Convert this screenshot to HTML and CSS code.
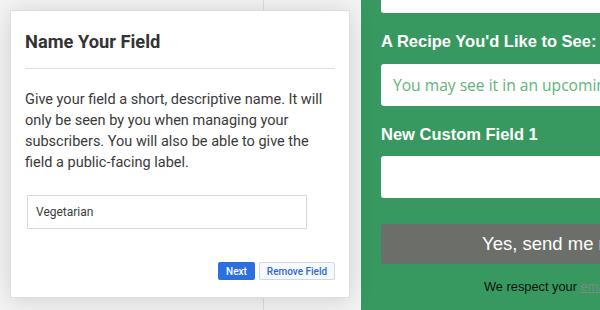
FILE: index.html
```html
<!DOCTYPE html>
<html>
<head>
<meta charset="utf-8">
<link rel="stylesheet" href="styles.css">
</head>
<body>
<div class="page">
  <div class="editor">
    <div class="sidebar"></div>
  </div>
  <div class="preview">
    <div class="form">
      <div class="field top-field"></div>
      <div class="label">A Recipe You'd Like to See:</div>
      <div class="field"><span class="placeholder">You may see it in an upcoming newsletter</span></div>
      <div class="label">New Custom Field 1</div>
      <div class="field"></div>
      <div class="submit"><span class="submit-text">Yes, send me recipes!</span></div>
      <div class="privacy"><span class="privacy-text">We respect your <span class="link">email privacy</span></span></div>
    </div>
  </div>
  <div class="modal">
    <h2 class="modal-title">Name Your Field</h2>
    <p class="modal-text">Give your field a short, descriptive name. It will only be seen by you when managing your subscribers. You will also be able to give the field a public-facing label.</p>
    <div class="name-input">Vegetarian</div>
    <div class="actions">
      <span class="btn btn-primary">Next</span>
      <span class="btn btn-secondary">Remove Field</span>
    </div>
  </div>
</div>
</body>
</html>
```
FILE: styles.css
```css
html, body {
  margin: 0;
  padding: 0;
}
body {
  width: 600px;
  height: 310px;
  overflow: hidden;
  background: #f3f3f4;
}
.page {
  position: relative;
  display: flex;
  width: 600px;
  height: 310px;
  overflow: hidden;
}
.editor {
  width: 361px;
  flex: none;
  height: 310px;
  background: #f4f4f5;
}
.sidebar {
  width: 264px;
  height: 310px;
  border-right: 1px solid #dcdcdf;
  box-sizing: border-box;
}
.preview {
  flex: none;
  width: 440px;
  height: 310px;
  background: #37995f;
  padding: 0 20px;
  box-sizing: border-box;
  font-family: "Liberation Sans", Arial, sans-serif;
}
.form {
  width: 398px;
}
.field {
  height: 42px;
  background: #fff;
  border-radius: 3px;
  display: flex;
  align-items: center;
  padding-left: 12px;
  overflow: hidden;
  white-space: nowrap;
}
.top-field {
  margin-top: -29px;
}
.placeholder {
  font-family: "Open Sans", sans-serif;
  font-size: 15.6px;
  color: #62b476;
}
.label {
  color: #fff;
  font-weight: bold;
  font-size: 16.5px;
  line-height: 19px;
  margin: 19px 0 13px;
  white-space: nowrap;
}
.label + .field + .label {
  margin-bottom: 12px;
}
.submit {
  margin-top: 26px;
  height: 40px;
  background: #6b6e69;
  border-radius: 3px;
  color: #fff;
  font-size: 18.5px;
  display: flex;
  align-items: center;
  padding-left: 101px;
  white-space: nowrap;
}
.privacy {
  margin-top: 15px;
  font-size: 12.8px;
  line-height: 16px;
  color: #111;
  white-space: nowrap;
  padding-left: 103px;
}
.link {
  color: #7a8a80;
  text-decoration: underline;
}
.modal {
  position: absolute;
  left: 10px;
  top: 10px;
  width: 340px;
  height: 288px;
  box-sizing: border-box;
  background: #fff;
  border: 1px solid #dcdde2;
  border-radius: 2px;
  box-shadow: 0 2px 24px rgba(0, 0, 0, 0.15);
  padding: 21px 14px 0;
  font-family: Roboto, "Liberation Sans", sans-serif;
  display: flex;
  flex-direction: column;
}
.modal-title {
  margin: 0;
  font-size: 18.3px;
  line-height: 20px;
  font-weight: 700;
  color: #333;
  padding-bottom: 16px;
  border-bottom: 1px solid #dcdde3;
}
.modal-text {
  margin: 20px 0 0;
  font-size: 14.5px;
  line-height: 21px;
  color: #3a3a3a;
}
.name-input {
  margin: 22px 0 0 2px;
  width: 280px;
  height: 34px;
  box-sizing: border-box;
  border: 1px solid #d8d9df;
  font-size: 12px;
  color: #3b3b3b;
  padding-left: 8px;
  display: flex;
  align-items: center;
}
.actions {
  margin-top: 33px;
  display: flex;
  justify-content: flex-end;
  gap: 4px;
}
.btn {
  height: 18px;
  box-sizing: border-box;
  font-size: 10px;
  font-weight: 500;
  display: flex;
  align-items: center;
  justify-content: center;
  border-radius: 2px;
}
.btn-primary {
  width: 37px;
  background: #2b6fe0;
  color: #fff;
}
.btn-secondary {
  width: 76px;
  background: #f6f9fe;
  border: 1px solid #cfd7e6;
  color: #2d68d6;
}
```
